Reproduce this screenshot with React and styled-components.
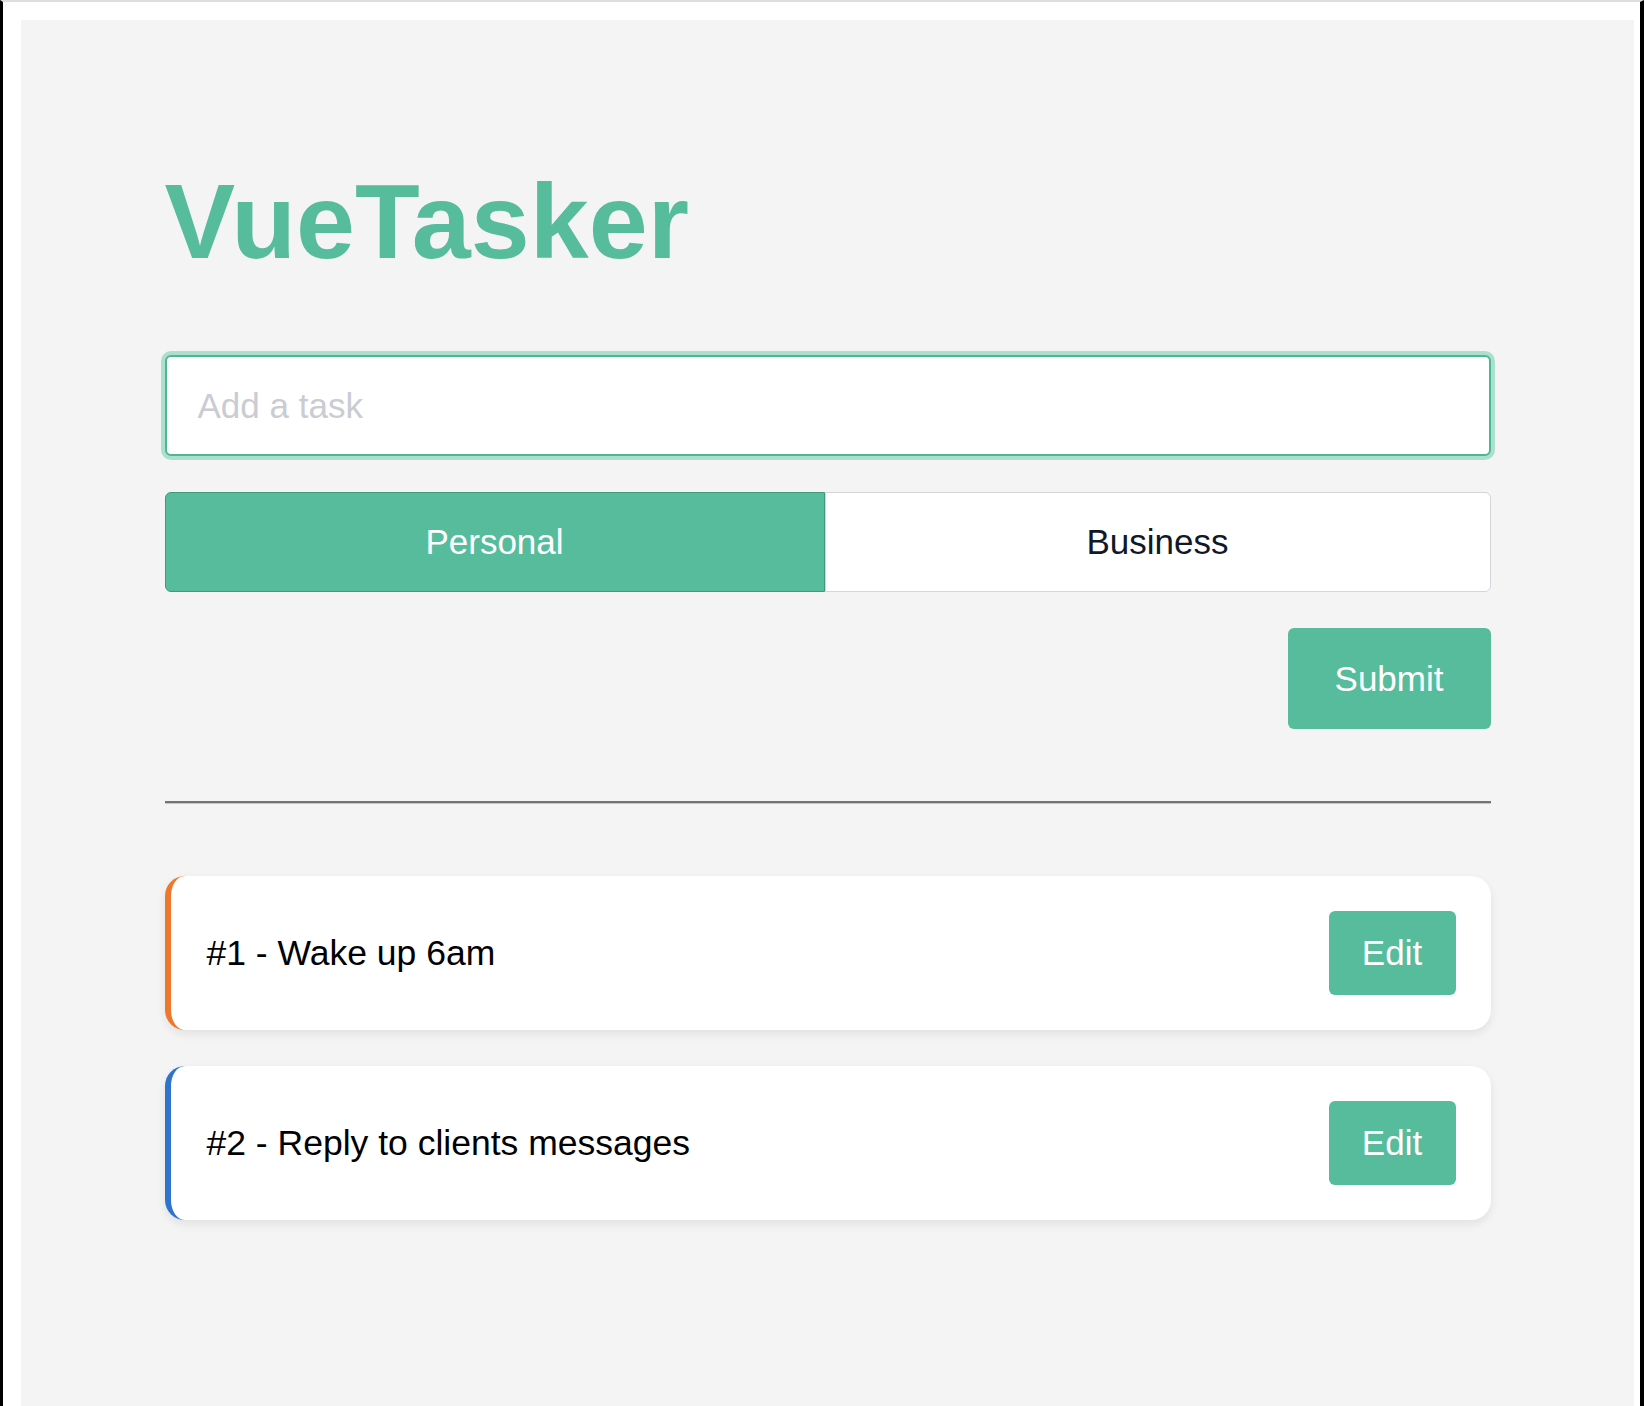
import styled, { createGlobalStyle } from 'styled-components'

const GlobalStyle = createGlobalStyle`
  * {
    box-sizing: border-box;
  }
  body {
    margin: 0;
    background: #ffffff;
    font-family: "Liberation Sans", Arial, sans-serif;
  }
`

const GREEN = '#57bc9c'

const Frame = styled.div`
  min-height: 1406px;
  border-left: 3px solid #000000;
  border-right: 4px solid #000000;
  border-top: 2px solid #dedede;
  padding: 18px 6px 0 18px;
  background: #ffffff;
`

const Panel = styled.main`
  min-height: 1386px;
  background: #f4f4f4;
  padding-top: 148px;
`

const Container = styled.div`
  width: 1326px;
  margin: 0 auto;
`

const Title = styled.h1`
  margin: 0 0 81px;
  font-size: 106px;
  line-height: 1;
  font-weight: 700;
  color: ${GREEN};
`

const TaskInput = styled.input`
  display: block;
  width: 100%;
  height: 101px;
  padding: 0 31px;
  border: 2px solid #4bb890;
  border-radius: 6px;
  box-shadow: 0 0 0 4px #addfcd;
  background: #ffffff;
  font-family: inherit;
  font-size: 35px;
  color: #111827;
  outline: none;

  &::placeholder {
    color: #c9ccd3;
  }
`

const Segmented = styled.div`
  display: grid;
  grid-template-columns: 660px 1fr;
  height: 100px;
  margin-top: 36px;
`

const Segment = styled.button`
  display: flex;
  align-items: center;
  justify-content: center;
  font-family: inherit;
  font-size: 35px;
  cursor: pointer;
  border: 1px solid ${p => (p.$active ? '#3d9a7c' : '#d3d6db')};
  background: ${p => (p.$active ? GREEN : '#ffffff')};
  color: ${p => (p.$active ? '#ffffff' : '#111827')};
  border-radius: ${p => (p.$side === 'left' ? '6px 0 0 6px' : '0 6px 6px 0')};
`

const SubmitRow = styled.div`
  display: flex;
  justify-content: flex-end;
  margin-top: 36px;
`

const Button = styled.button`
  border: none;
  border-radius: 6px;
  background: ${GREEN};
  color: #ffffff;
  font-family: inherit;
  font-size: 35px;
  cursor: pointer;
  width: ${p => p.$w}px;
  height: ${p => p.$h}px;
`

const Divider = styled.hr`
  margin: 72px 0;
  height: 0;
  border: none;
  border-top: 2px solid #747474;
  border-bottom: 1px solid #c6c6c6;
`

const TaskList = styled.ul`
  list-style: none;
  margin: 0;
  padding: 0;
  display: flex;
  flex-direction: column;
  gap: 36px;
`

const TaskCard = styled.li`
  display: flex;
  align-items: center;
  justify-content: space-between;
  height: 154px;
  padding: 0 35px 0 36px;
  background: #ffffff;
  border-radius: 20px;
  border-left: 6px solid ${p => p.$color};
  box-shadow: 0 4px 10px rgba(0, 0, 0, 0.08);
`

const TaskText = styled.span`
  font-size: 35.5px;
  color: #000000;
`

const tasks = [
  { id: 1, text: 'Wake up 6am', color: '#ef772c' },
  { id: 2, text: 'Reply to clients messages', color: '#2e73cc' },
]

export default function App() {
  return (
    <Frame>
      <GlobalStyle />
      <Panel>
        <Container>
          <Title>VueTasker</Title>
          <TaskInput placeholder="Add a task" />
          <Segmented>
            <Segment $active $side="left">Personal</Segment>
            <Segment $side="right">Business</Segment>
          </Segmented>
          <SubmitRow>
            <Button $w={203} $h={101}>Submit</Button>
          </SubmitRow>
          <Divider />
          <TaskList>
            {tasks.map(t => (
              <TaskCard key={t.id} $color={t.color}>
                <TaskText>#{t.id} - {t.text}</TaskText>
                <Button $w={127} $h={84}>Edit</Button>
              </TaskCard>
            ))}
          </TaskList>
        </Container>
      </Panel>
    </Frame>
  )
}
